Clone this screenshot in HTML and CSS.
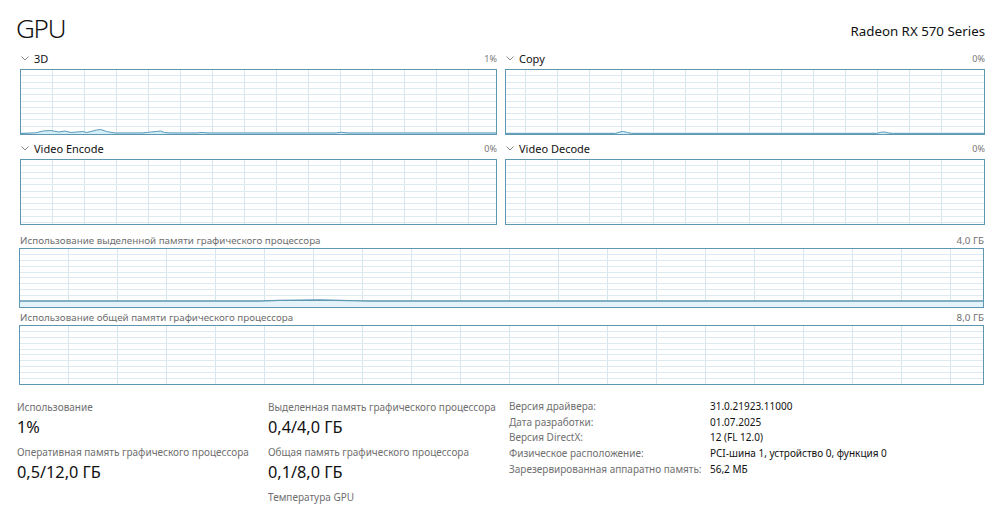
FILE: index.html
```html
<!DOCTYPE html>
<html lang="ru">
<head>
<meta charset="utf-8">
<link rel="stylesheet" href="styles.css">
</head>
<body>
<div class="page">
  <header class="head">
    <h1 class="title">GPU</h1>
    <div class="device">Radeon RX 570 Series</div>
  </header>

  <section class="engines">
    <div class="engine">
      <div class="elabel">
        <span class="ename"><svg class="chev" viewBox="0 0 8 5" width="8" height="5"><path d="M0.5 0.5 L4 4 L7.5 0.5" fill="none" stroke="#8a8a8a" stroke-width="1"/></svg>3D</span>
        <span class="pct">1%</span>
      </div>
      <div class="chart small g3d">
        <svg class="data" viewBox="0 0 477 64" preserveAspectRatio="none">
          <path d="M0 64 L14 64 L22 61 L30 60.5 L38 62 L44 61 L50 62.5 L56 62 L62 61.5 L66 62.5 L72 61 L76 60 L80 59.5 L86 61.5 L94 63 L122 63 L130 62 L136 61.5 L140 61 L144 62.5 L150 63 L176 63 L182 62.5 L188 63 L316 63 L322 62.3 L328 63 L477 63 L477 64 Z" fill="#d4eef7" stroke="none"/>
          <path d="M0 63.5 L14 63 L22 61 L30 60.5 L38 62 L44 61 L50 62.5 L56 62 L62 61.5 L66 62.5 L72 61 L76 60 L80 59.5 L86 61.5 L94 63 L122 63 L130 62 L136 61.5 L140 61 L144 62.5 L150 63 L176 63 L182 62.5 L188 63 L316 63 L322 62.3 L328 63 L477 63" fill="none" stroke="#5a9ab8" stroke-width="1"/>
        </svg>
      </div>
    </div>
    <div class="engine">
      <div class="elabel">
        <span class="ename"><svg class="chev" viewBox="0 0 8 5" width="8" height="5"><path d="M0.5 0.5 L4 4 L7.5 0.5" fill="none" stroke="#8a8a8a" stroke-width="1"/></svg>Copy</span>
        <span class="pct">0%</span>
      </div>
      <div class="chart small gcopy">
        <svg class="data" viewBox="0 0 480 64" preserveAspectRatio="none">
          <path d="M110 64 L114 62 L118 61.5 L122 62.5 L126 64 Z M372 64 L376 62.3 L380 62 L384 63 L388 64 Z" fill="#d4eef7"/>
          <path d="M0 63.6 L110 63.6 L114 62 L118 61.5 L122 62.5 L126 63.6 L372 63.6 L376 62.3 L380 62 L384 63 L388 63.6 L480 63.6" fill="none" stroke="#5a9ab8" stroke-width="1"/>
        </svg>
      </div>
    </div>
    <div class="engine">
      <div class="elabel">
        <span class="ename"><svg class="chev" viewBox="0 0 8 5" width="8" height="5"><path d="M0.5 0.5 L4 4 L7.5 0.5" fill="none" stroke="#8a8a8a" stroke-width="1"/></svg>Video Encode</span>
        <span class="pct">0%</span>
      </div>
      <div class="chart small g3d"></div>
    </div>
    <div class="engine">
      <div class="elabel">
        <span class="ename"><svg class="chev" viewBox="0 0 8 5" width="8" height="5"><path d="M0.5 0.5 L4 4 L7.5 0.5" fill="none" stroke="#8a8a8a" stroke-width="1"/></svg>Video Decode</span>
        <span class="pct">0%</span>
      </div>
      <div class="chart small gcopy"></div>
    </div>
  </section>

  <section class="memory">
    <div class="mlabel">
      <span>Использование выделенной памяти графического процессора</span>
      <span>4,0 ГБ</span>
    </div>
    <div class="chart wide">
      <svg class="data" viewBox="0 0 964 58" preserveAspectRatio="none">
        <path d="M0 52 L240 52 L260 51.3 L300 51 L330 51.6 L350 52 L964 52 L964 58 L0 58 Z" fill="#e3f3f9"/>
        <path d="M0 52 L240 52 L260 51.3 L300 51 L330 51.6 L350 52 L964 52" fill="none" stroke="#5f98b1" stroke-width="1.3"/>
      </svg>
    </div>
    <div class="mlabel">
      <span>Использование общей памяти графического процессора</span>
      <span>8,0 ГБ</span>
    </div>
    <div class="chart wide"></div>
  </section>

  <section class="stats">
    <div class="col">
      <div class="slabel">Использование</div>
      <div class="sval">1%</div>
      <div class="slabel">Оперативная память графического процессора</div>
      <div class="sval">0,5/12,0 ГБ</div>
    </div>
    <div class="col">
      <div class="slabel">Выделенная память графического процессора</div>
      <div class="sval">0,4/4,0 ГБ</div>
      <div class="slabel">Общая память графического процессора</div>
      <div class="sval">0,1/8,0 ГБ</div>
      <div class="slabel">Температура GPU</div>
    </div>
    <dl class="props">
      <dt>Версия драйвера:</dt><dd>31.0.21923.11000</dd>
      <dt>Дата разработки:</dt><dd>01.07.2025</dd>
      <dt>Версия DirectX:</dt><dd>12 (FL 12.0)</dd>
      <dt>Физическое расположение:</dt><dd>PCI-шина 1, устройство 0, функция 0</dd>
      <dt>Зарезервированная аппаратно память:</dt><dd>56,2 МБ</dd>
    </dl>
  </section>
</div>
</body>
</html>
```

FILE: styles.css
```css
* { box-sizing: border-box; }
html, body { margin: 0; padding: 0; background: #fff; }
body {
  font-family: "Noto Sans", "Open Sans", "Liberation Sans", sans-serif;
  color: #000;
  width: 1000px;
  height: 516px;
  overflow: hidden;
}
.page {
  padding: 9px 15px 0 20px;
}
.head {
  display: flex;
  justify-content: space-between;
  align-items: flex-end;
  height: 42px;
}
.title {
  margin: 0 0 6px -4px;
  font-size: 26px;
  font-weight: 300;
  line-height: 34px;
  letter-spacing: -1.2px;
  color: #111;
}
.device {
  font-size: 13.3px;
  line-height: 20px;
  margin-bottom: 10px;
  color: #111;
}
.engines {
  display: grid;
  grid-template-columns: 477px 480px;
  column-gap: 8px;
}
.elabel {
  display: flex;
  justify-content: space-between;
  align-items: center;
  height: 18px;
  font-size: 11px;
  line-height: 16px;
  padding-bottom: 3px;
}
.ename {
  display: flex;
  align-items: center;
  gap: 5px;
  margin-left: 1px;
  color: #111;
}
.chev { display: block; }
.pct {
  font-size: 9px;
  color: #777;
}
.chart {
  border: 1.5px solid #5f97b0;
  background-color: #fff;
}
.chart .data {
  display: block;
  width: 100%;
  height: 100%;
}
.small {
  height: 66px;
  margin-bottom: 6px;
  background-image:
    repeating-linear-gradient(to bottom, transparent 0, transparent 5.3px, #dcebf2 5.3px, #dcebf2 6.3px),
    repeating-linear-gradient(to right, transparent 0, transparent 31px, #d6e6ee 31px, #d6e6ee 32px);
  background-position: 0 0, 0 0;
}
.gcopy {
  background-position: 0 0, -12px 0;
}
.memory {
  margin-left: -1px;
  margin-right: 1px;
}
.mlabel {
  display: flex;
  justify-content: space-between;
  font-size: 9.8px;
  line-height: 13px;
  color: #6f6f6f;
  height: 14px;
  margin-top: 3px;
}
.mlabel span:first-child { margin-left: 1px; }
.wide {
  height: 60px;
  background-image:
    repeating-linear-gradient(to bottom, transparent 0, transparent 4.9px, #dcebf2 4.9px, #dcebf2 5.9px),
    repeating-linear-gradient(to right, transparent 0, transparent 48px, #d6e6ee 48px, #d6e6ee 49px);
}
.stats {
  display: grid;
  grid-template-columns: 251px 241px 1fr;
  margin-top: 14px;
  margin-left: -3px;
}
.col {
  display: flex;
  flex-direction: column;
}
.slabel {
  font-size: 10px;
  line-height: 16px;
  color: #6f6f6f;
  white-space: nowrap;
}
.sval {
  font-size: 16.3px;
  line-height: 24px;
  margin-bottom: 5px;
  color: #111;
}
.props {
  margin: 0;
  display: grid;
  grid-template-columns: 201px 1fr;
  grid-auto-rows: 15.7px;
  font-size: 10px;
  line-height: 15.7px;
  white-space: nowrap;
}
.props dt { color: #6f6f6f; }
.props dd { margin: 0; color: #111; }
```
